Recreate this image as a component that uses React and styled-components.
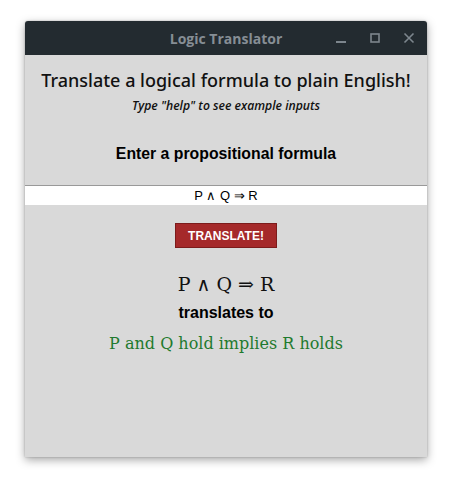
import React from 'react';
import styled, { createGlobalStyle } from 'styled-components';

const GlobalStyle = createGlobalStyle`
  html, body {
    margin: 0;
    padding: 0;
    background: #ffffff;
  }
`;

const Page = styled.div`
  width: 450px;
  height: 485px;
  padding: 21px 0 0 25px;
  box-sizing: border-box;
`;

const Window = styled.div`
  width: 402px;
  height: 436px;
  background: #d9d9d9;
  display: flex;
  flex-direction: column;
  box-shadow: 0 3px 10px rgba(0, 0, 0, 0.35), 0 0 2px rgba(0, 0, 0, 0.25);
  border-radius: 3px 3px 0 0;
  overflow: hidden;
`;

const TitleBar = styled.div`
  height: 34px;
  background: #232b30;
  position: relative;
  display: flex;
  align-items: center;
  justify-content: center;
  flex-shrink: 0;
`;

const Title = styled.div`
  font-family: 'Open Sans', 'Noto Sans', sans-serif;
  font-weight: 700;
  font-size: 14px;
  color: #868e95;
`;

const Controls = styled.div`
  position: absolute;
  right: 10px;
  top: 0;
  height: 34px;
  display: flex;
  align-items: center;
  gap: 18px;
`;

const Ctl = styled.svg`
  width: 16px;
  height: 16px;
  display: block;
`;

const Body = styled.div`
  display: flex;
  flex-direction: column;
  align-items: center;
`;

const Heading = styled.h1`
  margin: 13px 0 0;
  font-family: 'Noto Sans', 'Open Sans', sans-serif;
  font-weight: 500;
  font-size: 18px;
  line-height: 24px;
  color: #111;
`;

const Hint = styled.div`
  margin-top: 6px;
  font-family: 'Open Sans', sans-serif;
  font-style: italic;
  font-weight: 600;
  font-size: 12.2px;
  line-height: 16px;
  color: #111;
`;

const Label = styled.div`
  margin-top: 31px;
  font-family: 'Liberation Sans', Arial, sans-serif;
  font-weight: 700;
  font-size: 15.8px;
  line-height: 18px;
  color: #000;
`;

const Input = styled.input`
  margin-top: 22px;
  width: 100%;
  height: 20px;
  box-sizing: border-box;
  border: none;
  border-top: 1px solid #999;
  background: #fff;
  text-align: center;
  font-family: 'Liberation Sans', Arial, sans-serif;
  font-size: 13px;
  color: #000;
  padding: 0;
  outline: none;
`;

const Button = styled.button`
  margin-top: 18px;
  width: 102px;
  height: 25px;
  background: #a5292a;
  border: 1px solid #7c1b1b;
  color: #fff;
  font-family: 'Liberation Sans', Arial, sans-serif;
  font-weight: 700;
  font-size: 12px;
  padding: 0;
`;

const Formula = styled.div`
  margin-top: 24px;
  font-family: 'DejaVu Serif', 'Liberation Serif', serif;
  font-size: 19px;
  line-height: 24px;
  color: #111;
`;

const Translates = styled.div`
  margin-top: 7px;
  font-family: 'Liberation Sans', Arial, sans-serif;
  font-weight: 700;
  font-size: 16px;
  line-height: 20px;
  color: #000;
`;

const Result = styled.div`
  margin-top: 10px;
  font-family: 'DejaVu Serif', 'Liberation Serif', serif;
  font-size: 16px;
  line-height: 22px;
  color: #1f7a2e;
`;

export default function App() {
  return (
    <Page>
      <GlobalStyle />
      <Window>
        <TitleBar>
          <Title>Logic Translator</Title>
          <Controls>
            <Ctl viewBox="0 0 16 16">
              <rect x="3" y="11" width="10" height="2" fill="#7d868d" />
            </Ctl>
            <Ctl viewBox="0 0 16 16">
              <rect x="4" y="4" width="8" height="8" fill="none" stroke="#7d868d" strokeWidth="1.6" />
            </Ctl>
            <Ctl viewBox="0 0 16 16">
              <path d="M3.5 3.5 L12.5 12.5 M12.5 3.5 L3.5 12.5" stroke="#7d868d" strokeWidth="1.6" />
            </Ctl>
          </Controls>
        </TitleBar>
        <Body>
          <Heading>Translate a logical formula to plain English!</Heading>
          <Hint>Type "help" to see example inputs</Hint>
          <Label>Enter a propositional formula</Label>
          <Input defaultValue="P ∧ Q ⇒ R" />
          <Button>TRANSLATE!</Button>
          <Formula>P ∧ Q ⇒ R</Formula>
          <Translates>translates to</Translates>
          <Result>P and Q hold implies R holds</Result>
        </Body>
      </Window>
    </Page>
  );
}
